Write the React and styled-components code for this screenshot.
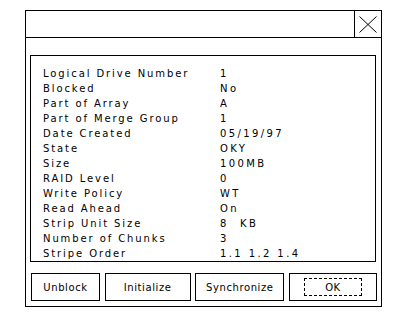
import React from "react";
import styled, { createGlobalStyle } from "styled-components";

const GlobalStyle = createGlobalStyle`
  body {
    margin: 0;
    background: #fff;
    font-family: "DejaVu Sans", "Liberation Sans", sans-serif;
    color: #000;
  }
`;

const rows = [
  ["Logical Drive Number", "1"],
  ["Blocked", "No"],
  ["Part of Array", "A"],
  ["Part of Merge Group", "1"],
  ["Date Created", "05/19/97"],
  ["State", "OKY"],
  ["Size", "100MB"],
  ["RAID Level", "0"],
  ["Write Policy", "WT"],
  ["Read Ahead", "On"],
  ["Strip Unit Size", "8  KB"],
  ["Number of Chunks", "3"],
  ["Stripe Order", "1.1 1.2 1.4"],
];

const buttons = [
  { label: "Unblock", width: 69 },
  { label: "Initialize", width: 86 },
  { label: "Synchronize", width: 89 },
  { label: "OK", width: 88, focused: true },
];

export default function App() {
  return (
    <>
      <GlobalStyle />
      <Window>
        <TitleBar>
          <Title />
          <CloseBox>
            <svg width="26" height="26" viewBox="0 0 26 26">
              <path d="M4.5 5.5 L21.5 21.5 M21.5 5.5 L4.5 21.5" stroke="#000" strokeWidth="1" fill="none" />
            </svg>
          </CloseBox>
        </TitleBar>
        <Body>
          <InfoPanel>
            {rows.map(([label, value]) => (
              <React.Fragment key={label}>
                <Label>{label}</Label>
                <Value>{value}</Value>
              </React.Fragment>
            ))}
          </InfoPanel>
          <ButtonRow>
            {buttons.map((b) => (
              <Button key={b.label} $width={b.width}>
                <Caption $focused={b.focused}>{b.label}</Caption>
              </Button>
            ))}
          </ButtonRow>
        </Body>
      </Window>
    </>
  );
}

const Window = styled.div`
  box-sizing: border-box;
  margin: 10px 0 0 25px;
  width: 357px;
  height: 297px;
  border: 1px solid #000;
  display: flex;
  flex-direction: column;
  background: #fff;
`;

const TitleBar = styled.div`
  box-sizing: border-box;
  height: 27px;
  border-bottom: 1px solid #000;
  display: flex;
`;

const Title = styled.div`
  flex: 1;
`;

const CloseBox = styled.div`
  box-sizing: border-box;
  width: 27px;
  border-left: 1px solid #000;
  display: flex;
  align-items: center;
  justify-content: center;
  svg {
    display: block;
  }
`;

const Body = styled.div`
  padding: 17px 5px 5px 4px;
  display: flex;
  flex-direction: column;
`;

const InfoPanel = styled.div`
  border: 1px solid #000;
  padding: 10px 0 0 12px;
  display: grid;
  grid-template-columns: 177px auto;
  grid-auto-rows: 15px;
  font-size: 10px;
  line-height: 15px;
  letter-spacing: 1.9px;
`;

const Label = styled.div`
  white-space: pre;
`;

const Value = styled.div`
  white-space: pre;
  letter-spacing: 2.4px;
`;

const ButtonRow = styled.div`
  margin: 11px -1px 0 1px;
  display: flex;
  justify-content: space-between;
`;

const Button = styled.div`
  box-sizing: border-box;
  width: ${(p) => p.$width}px;
  height: 28px;
  border: 1px solid #000;
  display: flex;
  align-items: center;
  justify-content: center;
  font-size: 10px;
  letter-spacing: 0.6px;
`;

const Caption = styled.span`
  box-sizing: border-box;
  display: flex;
  align-items: center;
  justify-content: center;
  ${(p) =>
    p.$focused &&
    `
    width: 58px;
    height: 18px;
    border: 1px dashed #000;
  `}
`;
